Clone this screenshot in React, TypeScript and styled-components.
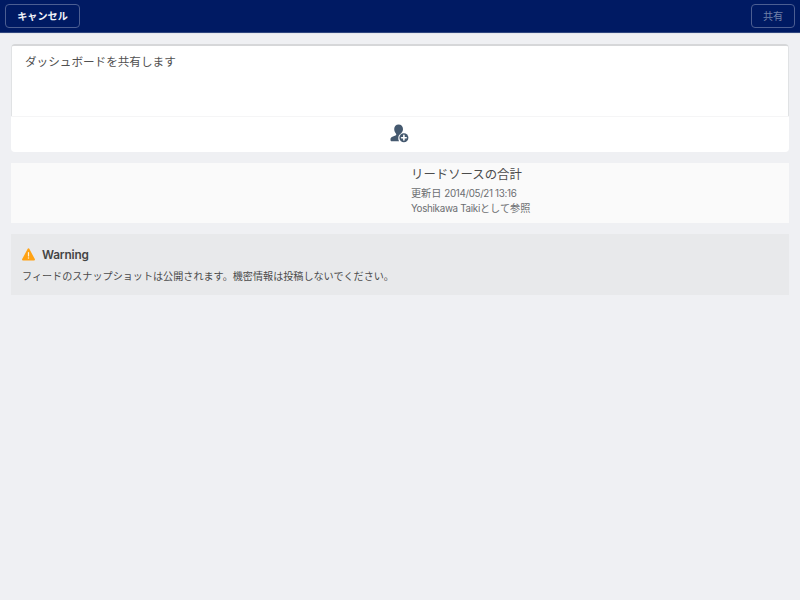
import React from "react";
import styled, { createGlobalStyle } from "styled-components";

const GlobalStyle = createGlobalStyle`
  * { box-sizing: border-box; }
  body {
    margin: 0;
    background: #eff0f3;
    font-family: Inter, "Noto Sans CJK JP", sans-serif;
    color: #4a4a4a;
  }
`;

const Page = styled.div`
  min-height: 600px;
  background: #eff0f3;
`;

const Header = styled.header`
  display: flex;
  justify-content: space-between;
  align-items: flex-start;
  height: 33px;
  padding: 4px 5px 0;
  background: #001a63;
  border-bottom: 1px solid #30467f;
  box-shadow: 0 1px 0 #e5e7ec;
`;

const HeaderButton = styled.button<{ $width: number; $muted?: boolean }>`
  display: flex;
  align-items: center;
  justify-content: center;
  width: ${(p) => p.$width}px;
  height: 24px;
  padding: 0;
  border: 1px solid #4c5e92;
  border-radius: 4px;
  background: transparent;
  color: ${(p) => (p.$muted ? "#7180a8" : "#f2f4fa")};
  font-family: "Noto Sans CJK JP", sans-serif;
  font-size: 10.1px;
  font-weight: ${(p) => (p.$muted ? 400 : 700)};
  line-height: 22px;
`;

const Content = styled.main`
  display: flex;
  flex-direction: column;
  gap: 11px;
  padding: 11px 11px 0;
`;

const Composer = styled.section`
  height: 108px;
  border-radius: 4px;
  overflow: hidden;
`;

const Message = styled.div`
  height: 72px;
  padding: 7px 13px 0;
  background: #fff;
  border: 1px solid #e0e2e4;
  border-top: 2px solid #d6d7d9;
  border-bottom: 0;
  border-radius: 3px 3px 0 0;
  color: #505050;
  font-size: 11.6px;
  line-height: 18px;
`;

const PeopleBar = styled.div`
  display: flex;
  align-items: flex-start;
  justify-content: center;
  height: 36px;
  padding: 7px 1px 0 0;
  background: #fff;
  border-top: 1px solid #f5f5f6;
`;

const Preview = styled.section`
  display: grid;
  grid-template-columns: 1fr 1fr;
  height: 60px;
  background: #fafafa;
`;

const Details = styled.div`
  grid-column: 2;
  padding: 2px 0 0 11px;
`;

const Title = styled.h1`
  margin: 0 0 1px;
  color: #4b4b4b;
  font-size: 12.4px;
  font-weight: 400;
  line-height: 20px;
`;

const Meta = styled.p`
  display: flex;
  margin: 0;
  color: #6c6e71;
  font-size: 10.15px;
  line-height: 15px;
  white-space: pre;
`;

const Latin = styled.span<{ $spacing: number }>`
  font-size: 9.8px;
  letter-spacing: ${(p) => p.$spacing}px;
`;

const Notice = styled.section`
  height: 61px;
  padding: 11px 11px 0;
  background: #e8e9eb;
`;

const NoticeHeading = styled.div`
  display: flex;
  align-items: center;
  gap: 7px;
  height: 18px;
  color: #444;
  font-size: 11.8px;
  font-weight: 600;
  letter-spacing: -0.15px;
  line-height: 18px;
`;

const NoticeLabel = styled.span`
  padding-top: 1px;
`;

const NoticeText = styled.p`
  margin: 4px 0 0;
  color: #4b4b4c;
  font-size: 10.1px;
  line-height: 18px;
  white-space: nowrap;
`;

const AddPerson = () => (
  <svg width="19" height="19" viewBox="0 0 19 19" aria-hidden="true">
    <path
      d="M8.6.4C6 .4 4.2 2.3 4.2 5c0 1.8.7 3.3 1.7 4.4.7.9.4 1.7-.5 2.1l-3 1.2C1.1 13.2.5 14 .5 15.1v.8c0 .8.5 1.3 1.3 1.3h7.3a5 5 0 0 1-.8-3.3c0-1.6.8-3 2-3.8l.9-.9C12.4 8.2 13 6.7 13 5 13 2.3 11.2.4 8.6.4Z"
      fill="#45596f"
    />
    <circle cx="13.9" cy="13.7" r="4.5" fill="#45596f" />
    <path d="M13.9 11.4v4.6M11.6 13.7h4.6" stroke="#fff" strokeWidth="1.6" strokeLinecap="round" />
  </svg>
);

const WarningIcon = () => (
  <svg width="13" height="13" viewBox="0 0 13 13" aria-hidden="true">
    <path
      d="M5.7.8a.9.9 0 0 1 1.6 0l5.5 10.3c.4.7 0 1.3-.8 1.3H1c-.8 0-1.2-.6-.8-1.3L5.7.8Z"
      fill="#ffa213"
    />
    <path d="M6.5 4.7v3.2" stroke="#fff3dc" strokeWidth="1.2" strokeLinecap="round" />
    <circle cx="6.5" cy="10" r=".75" fill="#fff3dc" />
  </svg>
);

export default function App() {
  return (
    <>
      <GlobalStyle />
      <Page lang="ja">
        <Header>
          <HeaderButton $width={75}>キャンセル</HeaderButton>
          <HeaderButton $width={44} $muted>共有</HeaderButton>
        </Header>
        <Content>
          <Composer>
            <Message>ダッシュボードを共有します</Message>
            <PeopleBar>
              <AddPerson />
            </PeopleBar>
          </Composer>
          <Preview>
            <Details>
              <Title>リードソースの合計</Title>
              <Meta>更新日 <Latin $spacing={-0.32}>2014/05/21 13:16</Latin></Meta>
              <Meta><Latin $spacing={-0.3}>Yoshikawa Taiki</Latin>として参照</Meta>
            </Details>
          </Preview>
          <Notice>
            <NoticeHeading>
              <WarningIcon />
              <NoticeLabel>Warning</NoticeLabel>
            </NoticeHeading>
            <NoticeText>フィードのスナップショットは公開されます。機密情報は投稿しないでください。</NoticeText>
          </Notice>
        </Content>
      </Page>
    </>
  );
}
